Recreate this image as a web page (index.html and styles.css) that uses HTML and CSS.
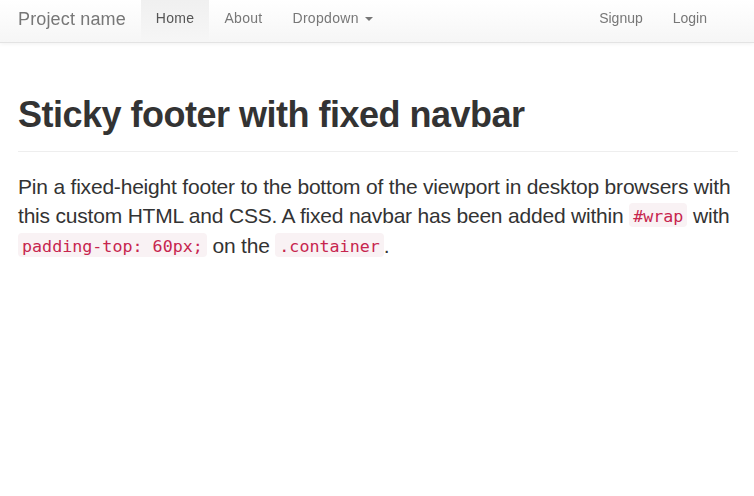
FILE: index.html
```html
<!DOCTYPE html>
<html lang="en">
<head>
<meta charset="utf-8">
<title>Sticky footer with fixed navbar</title>
<link rel="stylesheet" href="styles.css">
</head>
<body>
<div class="wrap">
  <nav class="navbar">
    <a class="brand" href="#">Project name</a>
    <ul class="nav">
      <li><a class="nav-link active" href="#">Home</a></li>
      <li><a class="nav-link" href="#">About</a></li>
      <li><a class="nav-link" href="#">Dropdown <span class="caret"></span></a></li>
    </ul>
    <ul class="nav nav-right">
      <li><a class="nav-link" href="#">Signup</a></li>
      <li><a class="nav-link" href="#">Login</a></li>
    </ul>
  </nav>
  <main class="container">
    <div class="page-header">
      <h1>Sticky footer with fixed navbar</h1>
    </div>
    <p class="lead">Pin a fixed-height footer to the bottom of the viewport in desktop browsers with this custom HTML and CSS. A fixed navbar has been added within <code>#wrap</code> with <code>padding-top: 60px;</code> on the <code>.container</code>.</p>
  </main>
</div>
</body>
</html>
```

FILE: styles.css
```css
* { box-sizing: border-box; }
html, body { margin: 0; padding: 0; height: 100%; }
body {
  font-family: "Liberation Sans", Arial, Helvetica, sans-serif;
  font-size: 14px;
  line-height: 20px;
  color: #333;
  background: #fff;
}
a { text-decoration: none; }

.navbar {
  position: fixed;
  top: 0; left: 0; right: 0;
  height: 43px;
  display: flex;
  align-items: stretch;
  padding: 0 32px 0 3px;
  background: linear-gradient(to bottom, #ffffff 0%, #f6f6f6 100%);
  border-bottom: 1px solid #e3e3e3;
  box-shadow: 0 1px 4px rgba(0,0,0,0.06);
  z-index: 10;
}
.brand {
  display: flex;
  align-items: center;
  padding: 0 15px 4px 15px;
  font-size: 18px;
  letter-spacing: 0.15px;
  color: #777;
}
.nav {
  list-style: none;
  margin: 0;
  padding: 0;
  display: flex;
}
.nav-right { margin-left: auto; }
.nav li { display: flex; }
.nav-link {
  display: flex;
  align-items: center;
  padding: 0 15px 6px 15px;
  color: #777;
  font-size: 14px;
  letter-spacing: 0.3px;
}
.nav-right .nav-link { letter-spacing: 0; }
.nav-link.active {
  color: #555;
  background: linear-gradient(to bottom, #f0f0f0 0%, #f6f6f6 100%);
}
.caret {
  display: inline-block;
  width: 0; height: 0;
  margin-left: 6px;
  margin-top: 2px;
  border-top: 4px solid #777;
  border-left: 4px solid transparent;
  border-right: 4px solid transparent;
}

.container {
  padding: 60px 16px 0 18px;
}
.page-header {
  margin: 35px 0 20px;
  padding-bottom: 16px;
  border-bottom: 1px solid #eee;
}
h1 {
  margin: 0;
  font-size: 36px;
  line-height: 40px;
  font-weight: bold;
  letter-spacing: -0.5px;
  color: #333;
}
.lead {
  margin: 0;
  font-size: 21px;
  line-height: 29px;
  font-weight: normal;
  letter-spacing: -0.2px;
  color: #333;
}
code {
  font-family: "DejaVu Sans Mono", Menlo, monospace;
  font-size: 16.7px;
  letter-spacing: 0;
  padding: 3px 4px 1px;
  vertical-align: 1px;
  color: #c7254e;
  background: #f9f2f4;
  border-radius: 4px;
}
```
